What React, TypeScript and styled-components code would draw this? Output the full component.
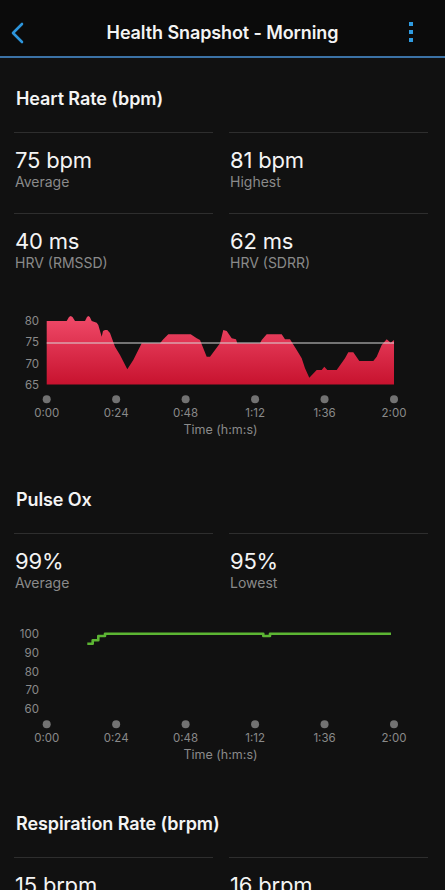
import React from "react";
import styled, { createGlobalStyle } from "styled-components";

const Global = createGlobalStyle`
  html, body { margin: 0; padding: 0; background: #111111; }
  body { font-family: Inter, "Noto Sans", "Liberation Sans", sans-serif; color: #f2f2f2; }
  * { box-sizing: border-box; }
`;

const Page = styled.div`
  width: 445px;
  min-height: 890px;
  background: #111111;
  overflow: hidden;
`;

const Header = styled.header`
  height: 58px;
  background: #0b0b0b;
  border-bottom: 2px solid #3b72a6;
  padding-top: 10px;
  display: grid;
  grid-template-columns: 48px 1fr 48px;
  align-items: center;
`;

const IconButton = styled.button<{ $pad: number }>`
  background: none;
  border: 0;
  padding: 0 0 0 ${(p) => p.$pad}px;
  height: 46px;
  display: flex;
  align-items: center;
  justify-content: flex-start;
  cursor: pointer;
`;

const Title = styled.h1`
  margin: 0;
  text-align: center;
  font-size: 18px;
  font-weight: 600;
  letter-spacing: -0.1px;
  color: #f4f4f4;
  line-height: 22px;
`;

const Section = styled.section<{ $top: number }>`
  padding-top: ${(p) => p.$top}px;
`;

const SectionTitle = styled.h2`
  margin: 0 0 22px 16px;
  font-size: 18px;
  font-weight: 600;
  line-height: 22px;
  letter-spacing: -0.1px;
  color: #f4f4f4;
`;

const StatsGrid = styled.div`
  display: grid;
  grid-template-columns: 1fr 1fr;
  column-gap: 16px;
  padding: 0 17px 0 14px;
`;

const StatCell = styled.div`
  border-top: 1px solid #2e2e2e;
  height: 81px;
  padding-top: 14px;
  padding-left: 1px;
`;

const StatValue = styled.div`
  font-size: 22px;
  line-height: 26px;
  font-weight: 400;
  color: #f4f4f4;
  letter-spacing: -0.2px;
`;

const StatLabel = styled.div`
  font-size: 14px;
  line-height: 18px;
  color: #8a8a8a;
`;

const ChartSvg = styled.svg<{ $mt: number }>`
  display: block;
  margin-top: ${(p) => p.$mt}px;
  font-family: Inter, "Noto Sans", "Liberation Sans", sans-serif;
`;

const xTicks = ["0:00", "0:24", "0:48", "1:12", "1:36", "2:00"];
const tickX = (i: number) => 46.7 + i * 69.46;

const heartPts =
  "M46.7,384.5 L46.7,321 L66.7,321 L69,317 L70.7,316 L72.5,317 L75,321 L85,321 L87,317 L88.3,316 L89.8,317 L91.7,321 L96.7,322.7 L98.3,325 L101.7,336.7 L103,331 L105,330 L107.3,330 L110,333 L115,346.7 L120,355 L127.3,369.3 L133.3,360 L141.7,343.3 L160,343.3 L163.3,339.3 L168.3,334.3 L190.7,334.3 L196.7,338.3 L200,340 L206.7,356.7 L210,356.7 L220,343.3 L223.3,330 L226.7,331 L231.7,338.3 L236,339.3 L237.3,343.3 L260,343.3 L261.7,340 L266.7,334.3 L281.7,334.3 L285,339.3 L290,339.3 L296.7,350 L301.7,358.3 L305,368.3 L309.3,377.7 L316.7,370 L321.7,370 L324.3,366.7 L327.3,370 L336.7,370 L345,358.3 L348.3,352.3 L353.3,352.3 L359.3,361 L373.3,361 L376.7,356.7 L381.7,345 L386.7,339.3 L390.7,342.7 L394,340 L394,384.5 Z";

const pulsePts =
  "M87.3,642.7 H92.7 V639.3 H98.3 V635 H105 V632.7 H263.3 V635 H270 V632.7 H391";

type Axis = { yLabels: [string, number][]; dotY: number; labelY: number; timeY: number };

const XAxis: React.FC<Axis> = ({ yLabels, dotY, labelY, timeY }) => (
  <g>
    {yLabels.map(([t, y]) => (
      <text key={t} x={39} y={y} textAnchor="end" dominantBaseline="central" fontSize="11.5" fill="#8a8a8a">
        {t}
      </text>
    ))}
    {xTicks.map((t, i) => (
      <g key={t}>
        <circle cx={tickX(i)} cy={dotY} r={4} fill="#727272" />
        <text x={tickX(i)} y={labelY} textAnchor="middle" dominantBaseline="central" fontSize="11.5" fill="#8a8a8a">
          {t}
        </text>
      </g>
    ))}
    <text x={220.5} y={timeY} textAnchor="middle" dominantBaseline="central" fontSize="12.5" fill="#8a8a8a">
      Time (h:m:s)
    </text>
  </g>
);

const HeartChart = () => (
  <ChartSvg $mt={6} width={445} height={140} viewBox="0 300 445 140">
    <defs>
      <linearGradient id="hr" x1="0" y1="316" x2="0" y2="385" gradientUnits="userSpaceOnUse">
        <stop offset="0" stopColor="#f04a69" />
        <stop offset="1" stopColor="#c7122e" />
      </linearGradient>
    </defs>
    <path d={heartPts} fill="url(#hr)" />
    <line x1={46.7} x2={394} y1={343} y2={343} stroke="#d8d8d8" strokeWidth={1} />
    <XAxis
      yLabels={[
        ["80", 321],
        ["75", 342.3],
        ["70", 363.7],
        ["65", 385],
      ]}
      dotY={399.3}
      labelY={413.3}
      timeY={429.5}
    />
  </ChartSvg>
);

const PulseChart = () => (
  <ChartSvg $mt={5} width={445} height={147} viewBox="0 618 445 147">
    <path d={pulsePts} fill="none" stroke="#5cb533" strokeWidth={2.6} strokeLinejoin="round" />
    <XAxis
      yLabels={[
        ["100", 632.7],
        ["90", 651.6],
        ["80", 670.5],
        ["70", 689.4],
        ["60", 708.3],
      ]}
      dotY={723.3}
      labelY={737.3}
      timeY={753}
    />
  </ChartSvg>
);

const Stat: React.FC<{ value: string; label: string }> = ({ value, label }) => (
  <StatCell>
    <StatValue>{value}</StatValue>
    <StatLabel>{label}</StatLabel>
  </StatCell>
);

export default function App() {
  return (
    <Page>
      <Global />
      <Header>
        <IconButton $pad={10} aria-label="Back">
          <svg width="16" height="22" viewBox="0 0 16 22">
            <polyline points="12,2 3,11 12,20" fill="none" stroke="#2d95dc" strokeWidth="2.6" strokeLinecap="round" strokeLinejoin="round" />
          </svg>
        </IconButton>
        <Title>Health Snapshot - Morning</Title>
        <IconButton $pad={11} aria-label="More">
          <svg width="6" height="22" viewBox="0 0 6 22">
            <rect x="1" y="0" width="4" height="4" fill="#2f9be0" />
            <rect x="1" y="8" width="4" height="4" fill="#2f9be0" />
            <rect x="1" y="16" width="4" height="4" fill="#2f9be0" />
          </svg>
        </IconButton>
      </Header>

      <Section $top={30}>
        <SectionTitle>Heart Rate (bpm)</SectionTitle>
        <StatsGrid>
          <Stat value="75 bpm" label="Average" />
          <Stat value="81 bpm" label="Highest" />
          <Stat value="40 ms" label="HRV (RMSSD)" />
          <Stat value="62 ms" label="HRV (SDRR)" />
        </StatsGrid>
        <HeartChart />
      </Section>

      <Section $top={49}>
        <SectionTitle>Pulse Ox</SectionTitle>
        <StatsGrid>
          <Stat value="99%" label="Average" />
          <Stat value="95%" label="Lowest" />
        </StatsGrid>
        <PulseChart />
      </Section>

      <Section $top={47}>
        <SectionTitle>Respiration Rate (brpm)</SectionTitle>
        <StatsGrid>
          <Stat value="15 brpm" label="Average" />
          <Stat value="16 brpm" label="Highest" />
        </StatsGrid>
      </Section>
    </Page>
  );
}
